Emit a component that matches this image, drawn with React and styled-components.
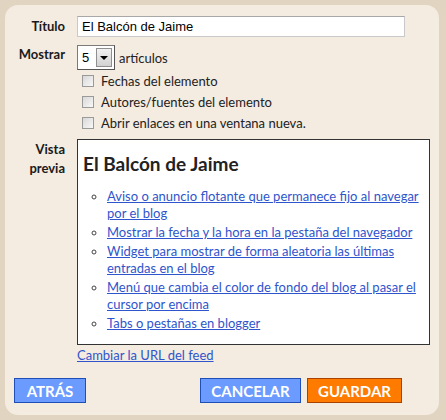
import React from 'react';
import styled, { createGlobalStyle } from 'styled-components';

const GlobalStyle = createGlobalStyle`
  html, body {
    margin: 0;
    padding: 0;
    background: #e1d5c1;
  }
  body {
    font-family: "Trebuchet MS", Lato, "DejaVu Sans", sans-serif;
    font-size: 13px;
    color: #222;
  }
`;

const Frame = styled.div`
  padding: 5px 7px 5px 5px;
  width: 446px;
  height: 420px;
  box-sizing: border-box;
`;

const Panel = styled.div`
  background: #f4ebe1;
  border-radius: 13px;
  height: 410px;
  box-sizing: border-box;
  padding: 11px 0 0 0;
  display: flex;
  flex-direction: column;
`;

const Row = styled.div`
  display: grid;
  grid-template-columns: 60px 1fr;
  column-gap: 12px;
  align-items: ${({ center }) => (center ? 'center' : 'start')};
  margin-bottom: ${({ gap }) => gap || 0}px;
`;

const Label = styled.label`
  text-align: right;
  font-weight: bold;
  line-height: 19px;
  color: #1a1a1a;
  padding-top: ${({ top }) => top || 0}px;
`;

const TextInput = styled.input`
  width: 328px;
  height: 21px;
  box-sizing: border-box;
  border: 1px solid #c9c9c9;
  border-top-color: #a8a8a8;
  background: #fff;
  padding: 0 4px;
  font-family: "Liberation Sans", Arial, sans-serif;
  font-size: 13px;
  color: #000;
  outline: none;
`;

const Options = styled.div`
  display: flex;
  flex-direction: column;
`;

const CountLine = styled.div`
  display: flex;
  align-items: center;
  gap: 4px;
`;

const SelectBox = styled.div`
  width: 38px;
  height: 25px;
  box-sizing: border-box;
  border: 1px solid #7a7a7a;
  border-right-color: #555;
  border-bottom-color: #555;
  background: #fff;
  display: flex;
  align-items: center;
  justify-content: space-between;
  padding: 0 2px 0 4px;
  font-family: "Liberation Sans", Arial, sans-serif;
  font-size: 13px;
  color: #000;
`;

const ArrowButton = styled.span`
  width: 16px;
  height: 19px;
  box-sizing: border-box;
  border: 1px solid #8f8f8f;
  background: linear-gradient(#f2f2f2, #d2d2d2);
  display: flex;
  align-items: center;
  justify-content: center;
`;

const Arrow = styled.span`
  width: 0;
  height: 0;
  border-left: 4px solid transparent;
  border-right: 4px solid transparent;
  border-top: 4px solid #000;
`;

const CheckLine = styled.label`
  display: flex;
  align-items: center;
  height: 21px;
  padding-left: 5px;
  gap: 7px;
`;

const Check = styled.input`
  appearance: none;
  margin: 0;
  width: 12px;
  height: 12px;
  box-sizing: border-box;
  border: 1px solid #9a9a9a;
  background: linear-gradient(135deg, #d8d8d8, #f8f8f8);
`;

const Preview = styled.div`
  width: 353px;
  height: 206px;
  box-sizing: border-box;
  border: 1px solid #333;
  background: #fff;
  padding: 12px 5px 0 5px;
`;

const PreviewTitle = styled.h2`
  margin: 0 0 12px 0;
  font-size: 19px;
  font-weight: bold;
  color: #222;
  line-height: 24px;
`;

const PostList = styled.ul`
  margin: 0;
  padding-left: 24px;
  list-style: circle;
  color: #444;
`;

const Post = styled.li`
  line-height: 17px;
  margin-bottom: 2px;
`;

const Link = styled.a`
  color: #2f55cc;
  text-decoration: underline;
  cursor: pointer;
`;

const FeedLink = styled(Link)`
  display: block;
  margin: 2px 0 0 72px;
  line-height: 17px;
`;

const Footer = styled.div`
  display: flex;
  align-items: center;
  margin-top: 14px;
  padding: 0 37px 0 9px;
`;

const Button = styled.button`
  height: 25px;
  width: ${({ w }) => w}px;
  box-sizing: border-box;
  border: 1px solid ${({ orange }) => (orange ? '#a84300' : '#1f4eb4')};
  background: ${({ orange }) => (orange ? '#ff7b00' : '#6b9bff')};
  color: #fff;
  font-family: inherit;
  font-size: 15px;
  font-weight: bold;
  text-transform: uppercase;
  padding: 0;
  cursor: pointer;
`;

const Spacer = styled.div`
  flex: 1;
`;

const ButtonGroup = styled.div`
  display: flex;
  gap: 6px;
`;

const posts = [
  'Aviso o anuncio flotante que permanece fijo al navegar por el blog',
  'Mostrar la fecha y la hora en la pestaña del navegador',
  'Widget para mostrar de forma aleatoria las últimas entradas en el blog',
  'Menú que cambia el color de fondo del blog al pasar el cursor por encima',
  'Tabs o pestañas en blogger',
];

export default function App() {
  return (
    <Frame>
      <GlobalStyle />
      <Panel>
        <Row center gap={8}>
          <Label>Título</Label>
          <TextInput defaultValue="El Balcón de Jaime" />
        </Row>
        <Row gap={6}>
          <Label>Mostrar</Label>
          <Options>
            <CountLine>
              <SelectBox>
                5
                <ArrowButton>
                  <Arrow />
                </ArrowButton>
              </SelectBox>
              artículos
            </CountLine>
            <CheckLine>
              <Check type="checkbox" />
              Fechas del elemento
            </CheckLine>
            <CheckLine>
              <Check type="checkbox" />
              Autores/fuentes del elemento
            </CheckLine>
            <CheckLine>
              <Check type="checkbox" />
              Abrir enlaces en una ventana nueva.
            </CheckLine>
          </Options>
        </Row>
        <Row>
          <Label top={1}>
            Vista
            <br />
            previa
          </Label>
          <Preview>
            <PreviewTitle>El Balcón de Jaime</PreviewTitle>
            <PostList>
              {posts.map((p) => (
                <Post key={p}>
                  <Link>{p}</Link>
                </Post>
              ))}
            </PostList>
          </Preview>
        </Row>
        <FeedLink>Cambiar la URL del feed</FeedLink>
        <Footer>
          <Button w={72}>Atrás</Button>
          <Spacer />
          <ButtonGroup>
            <Button w={101}>Cancelar</Button>
            <Button w={95} orange>
              Guardar
            </Button>
          </ButtonGroup>
        </Footer>
      </Panel>
    </Frame>
  );
}
